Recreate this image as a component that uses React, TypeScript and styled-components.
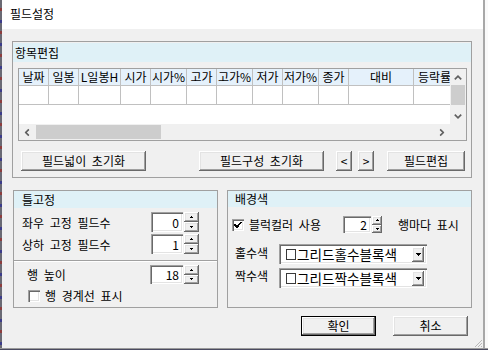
import React from "react";
import styled, { createGlobalStyle, css } from "styled-components";

const GlobalStyle = createGlobalStyle`
  html, body { margin: 0; padding: 0; background: #fafafa; overflow: hidden; }
  body {
    font-family: "Noto Sans CJK KR", "Noto Sans", "DejaVu Sans", sans-serif;
    font-size: 12px;
    color: #000;
    word-spacing: 3px;
  }
  * { box-sizing: border-box; }
`;

const raised = css`
  box-shadow: inset -1px -1px 0 #696969, inset 1px 1px 0 #ffffff,
    inset -2px -2px 0 #a0a0a0, inset 2px 2px 0 #e3e3e3;
`;
const sunken = css`
  box-shadow: inset 1px 1px 0 #a0a0a0, inset 2px 2px 0 #696969,
    inset -1px -1px 0 #ffffff, inset -2px -2px 0 #e3e3e3;
`;

const Screen = styled.div`
  width: 488px;
  height: 350px;
  display: flex;
  flex-direction: column;
`;

const Stage = styled.div`
  display: flex;
  height: 348px;
`;

const DesktopEdge = styled.div`
  width: 2px;
  background: repeating-linear-gradient(
    to bottom,
    #6a6a74 0 8px,
    #8d3d3d 8px 11px,
    #6a6a74 11px 20px,
    #3c3c8a 20px 23px
  );
`;

const BottomEdge = styled.div`
  height: 2px;
  background: linear-gradient(to bottom, #9a9a9a 0 1px, #4a4a60 1px 2px);
`;

const Window = styled.div`
  position: relative;
  width: 483px;
  display: flex;
  flex-direction: column;
  border-right: 2px solid #a8a8a8;
`;

const TitleBar = styled.div`
  height: 29px;
  background: #ffffff;
  display: flex;
  align-items: center;
  padding: 0 0 3px 8px;
  word-spacing: 0;
`;

const Body = styled.div`
  flex: 1;
  background: #f0f0f0;
  padding: 12px 0 0 10px;
  display: flex;
  flex-direction: column;
`;

const Group = styled.section<{ $w: number; $h: number }>`
  width: ${(p) => p.$w}px;
  height: ${(p) => p.$h}px;
  border: 1px solid #a0a0a0;
  display: flex;
  flex-direction: column;
  flex: 0 0 auto;
`;

const GroupTitle = styled.div<{ $h: number; $pl: number; $mt: number }>`
  height: ${(p) => p.$h}px;
  margin-top: ${(p) => p.$mt}px;
  padding-left: ${(p) => p.$pl}px;
  line-height: ${(p) => p.$h}px;
  background: #dff1f7;
  word-spacing: 0;
`;

/* ---------- grid ---------- */
const Grid = styled.div`
  margin: 6px 0 0 5px;
  width: 449px;
  height: 73px;
  border: 1px solid #a0a0a0;
  display: grid;
  grid-template-columns: 431px 16px;
  grid-template-rows: 55px 16px;
  background: #ffffff;
`;

const Cells = styled.div`
  overflow: hidden;
  background: #ffffff;
`;

const GridRow = styled.div<{ $h: number }>`
  display: flex;
  height: ${(p) => p.$h}px;
`;

const HeaderCell = styled.div<{ $w: number }>`
  flex: 0 0 ${(p) => p.$w}px;
  border-right: 1px solid #c0c0c0;
  border-bottom: 1px solid #c0c0c0;
  background: #e5f1fb;
  text-align: center;
  line-height: 16px;
  white-space: nowrap;
  overflow: hidden;
  word-spacing: 0;
`;

const DataCell = styled.div<{ $w: number }>`
  flex: 0 0 ${(p) => p.$w}px;
  border-right: 1px solid #c0c0c0;
  border-bottom: 1px solid #c0c0c0;
`;

const VScroll = styled.div`
  background: #f0f0f0;
  display: flex;
  flex-direction: column;
`;

const HScroll = styled.div`
  background: #f0f0f0;
  display: flex;
`;

const Corner = styled.div`
  background: #f0f0f0;
`;

const ScrollArrow = styled.div`
  flex: 0 0 16px;
  width: 16px;
  height: 16px;
  display: flex;
  align-items: center;
  justify-content: center;
`;

const VThumb = styled.div`
  flex: 0 0 20px;
  margin: 0 1px;
  background: #cdcdcd;
`;

const HThumb = styled.div`
  flex: 0 0 125px;
  margin: 1px 0 1px 1px;
  background: #cdcdcd;
`;

const Track = styled.div`
  flex: 1;
`;

const ChevronSvg = styled.svg<{ $rot: number }>`
  transform: rotate(${(p) => p.$rot}deg);
`;

const Chevron = ({ rot }: { rot: number }) => (
  <ChevronSvg $rot={rot} width="8" height="5" viewBox="0 0 8 5">
    <polyline points="0.8,4.4 4,1.2 7.2,4.4" fill="none" stroke="#606060" strokeWidth="1.7" />
  </ChevronSvg>
);

/* ---------- buttons ---------- */
const ButtonRow = styled.div<{ $mt: number; $pl: number; $pr: number; $justify: string }>`
  display: flex;
  margin-top: ${(p) => p.$mt}px;
  padding-left: ${(p) => p.$pl}px;
  padding-right: ${(p) => p.$pr}px;
  justify-content: ${(p) => p.$justify};
  height: 20px;
`;

const Button = styled.button<{ $w: number; $ml: number; $default?: boolean }>`
  width: ${(p) => p.$w}px;
  height: 20px;
  margin: 0 0 0 ${(p) => p.$ml}px;
  padding: 0 0 2px;
  font: inherit;
  font-size: 12px;
  word-spacing: 3px;
  color: #000;
  background: #f0f0f0;
  border: none;
  ${raised}
  ${(p) =>
    p.$default &&
    css`
      box-shadow: inset 0 0 0 1px #000000, inset -2px -2px 0 #696969, inset 2px 2px 0 #ffffff,
        inset -3px -3px 0 #a0a0a0, inset 3px 3px 0 #e3e3e3;
    `}
`;

/* ---------- lower panels ---------- */
const LowerRow = styled.div`
  display: flex;
  gap: 9px;
  margin: 12px 0 0 1px;
`;

const FieldRow = styled.div<{ $mt: number; $h: number; $pl: number }>`
  display: flex;
  align-items: center;
  margin-top: ${(p) => p.$mt}px;
  height: ${(p) => p.$h}px;
  padding-left: ${(p) => p.$pl}px;
`;

const FieldLabel = styled.span<{ $w: number; $pb?: number; $pl?: number }>`
  flex: 0 0 ${(p) => p.$w}px;
  white-space: nowrap;
  padding-bottom: ${(p) => p.$pb ?? 0}px;
  padding-left: ${(p) => p.$pl ?? 0}px;
`;

const Text = styled.span<{ $ml: number }>`
  margin-left: ${(p) => p.$ml}px;
  white-space: nowrap;
`;

const Separator = styled.div`
  margin-top: 6px;
  height: 2px;
  border-top: 1px solid #a0a0a0;
  border-bottom: 1px solid #ffffff;
`;

const Spin = styled.div<{ $h: number }>`
  display: flex;
  height: ${(p) => p.$h}px;
  gap: 1px;
`;

const SpinEdit = styled.div<{ $w: number }>`
  width: ${(p) => p.$w}px;
  height: 100%;
  background: #ffffff;
  ${sunken}
  text-align: right;
  padding-right: 4px;
  display: flex;
  align-items: center;
  justify-content: flex-end;
  font-size: 12px;
`;

const SpinButtons = styled.div<{ $w: number }>`
  width: ${(p) => p.$w}px;
  height: 100%;
  display: flex;
  flex-direction: column;
`;

const SpinButton = styled.div`
  flex: 1;
  background: #f0f0f0;
  ${raised}
  display: flex;
  align-items: center;
  justify-content: center;
`;

const TinyArrow = ({ down }: { down?: boolean }) => (
  <svg width="3" height="2" viewBox="0 0 3 2" shapeRendering="crispEdges">
    {down ? (
      <>
        <rect x="0" y="0" width="3" height="1" fill="#000" />
        <rect x="1" y="1" width="1" height="1" fill="#000" />
      </>
    ) : (
      <>
        <rect x="1" y="0" width="1" height="1" fill="#000" />
        <rect x="0" y="1" width="3" height="1" fill="#000" />
      </>
    )}
  </svg>
);

const SpinBox = ({ value, editW, btnW, h }: { value: string; editW: number; btnW: number; h: number }) => (
  <Spin $h={h}>
    <SpinEdit $w={editW}>{value}</SpinEdit>
    <SpinButtons $w={btnW}>
      <SpinButton>
        <TinyArrow />
      </SpinButton>
      <SpinButton>
        <TinyArrow down />
      </SpinButton>
    </SpinButtons>
  </Spin>
);

const CheckBox = styled.span<{ $size: number }>`
  flex: 0 0 ${(p) => p.$size}px;
  width: ${(p) => p.$size}px;
  height: ${(p) => p.$size}px;
  background: #ffffff;
  ${sunken}
  display: flex;
  align-items: center;
  justify-content: center;
`;

const Combo = styled.div`
  width: 148px;
  height: 20px;
  background: #ffffff;
  ${sunken}
  display: flex;
  align-items: center;
  padding: 2px 3px 2px 7px;
  font-size: 13.6px;
  word-spacing: 0;
`;

const Swatch = styled.span`
  flex: 0 0 10px;
  width: 10px;
  height: 11px;
  border: 1px solid #3a3a3a;
  background: #ffffff;
`;

const ComboText = styled.span`
  flex: 1;
  margin-left: 1px;
  white-space: nowrap;
  line-height: 16px;
`;

const DropButton = styled.span`
  flex: 0 0 12px;
  height: 15px;
  background: #f0f0f0;
  ${raised}
  display: flex;
  align-items: center;
  justify-content: center;
`;

const DownTriangle = () => (
  <svg width="5" height="3" viewBox="0 0 5 3" shapeRendering="crispEdges">
    <rect x="0" y="0" width="5" height="1" fill="#000" />
    <rect x="1" y="1" width="3" height="1" fill="#000" />
    <rect x="2" y="2" width="1" height="1" fill="#000" />
  </svg>
);

const Grip = styled.svg`
  position: absolute;
  right: 0;
  bottom: 0;
`;

const columns = [
  { t: "날짜", w: 30 },
  { t: "일봉", w: 30 },
  { t: "L일봉H", w: 42 },
  { t: "시가", w: 30 },
  { t: "시가%", w: 36 },
  { t: "고가", w: 30 },
  { t: "고가%", w: 36 },
  { t: "저가", w: 30 },
  { t: "저가%", w: 36 },
  { t: "종가", w: 30 },
  { t: "대비", w: 65 },
  { t: "등락률", w: 42 },
];

export default function App() {
  return (
    <>
      <GlobalStyle />
      <Screen>
        <Stage>
          <DesktopEdge />
          <Window>
            <TitleBar>필드설정</TitleBar>
            <Body>
              <Group $w={460} $h={137}>
                <GroupTitle $h={19} $pl={2} $mt={1}>
                  항목편집
                </GroupTitle>
                <Grid>
                  <Cells>
                    <GridRow $h={17}>
                      {columns.map((c) => (
                        <HeaderCell key={c.t} $w={c.w}>
                          {c.t}
                        </HeaderCell>
                      ))}
                    </GridRow>
                    <GridRow $h={19}>
                      {columns.map((c) => (
                        <DataCell key={c.t} $w={c.w} />
                      ))}
                    </GridRow>
                  </Cells>
                  <VScroll>
                    <ScrollArrow>
                      <Chevron rot={0} />
                    </ScrollArrow>
                    <VThumb />
                    <Track />
                    <ScrollArrow>
                      <Chevron rot={180} />
                    </ScrollArrow>
                  </VScroll>
                  <HScroll>
                    <ScrollArrow>
                      <Chevron rot={-90} />
                    </ScrollArrow>
                    <HThumb />
                    <Track />
                    <ScrollArrow>
                      <Chevron rot={90} />
                    </ScrollArrow>
                  </HScroll>
                  <Corner />
                </Grid>
                <ButtonRow $mt={10} $pl={8} $pr={0} $justify="flex-start">
                  <Button $w={125} $ml={0}>필드넓이 초기화</Button>
                  <Button $w={125} $ml={53}>필드구성 초기화</Button>
                  <Button $w={16} $ml={12}>&lt;</Button>
                  <Button $w={16} $ml={6}>&gt;</Button>
                  <Button $w={78} $ml={13}>필드편집</Button>
                </ButtonRow>
              </Group>

              <LowerRow>
                <Group $w={205} $h={118}>
                  <GroupTitle $h={17} $pl={8} $mt={0}>
                    틀고정
                  </GroupTitle>
                  <FieldRow $mt={4} $h={20} $pl={8}>
                    <FieldLabel $w={129}>좌우 고정 필드수</FieldLabel>
                    <SpinBox value="0" editW={32} btnW={15} h={20} />
                  </FieldRow>
                  <FieldRow $mt={2} $h={20} $pl={8}>
                    <FieldLabel $w={129}>상하 고정 필드수</FieldLabel>
                    <SpinBox value="1" editW={32} btnW={15} h={20} />
                  </FieldRow>
                  <Separator />
                  <FieldRow $mt={3} $h={19} $pl={13}>
                    <FieldLabel $w={123}>행 높이</FieldLabel>
                    <SpinBox value="18" editW={33} btnW={15} h={19} />
                  </FieldRow>
                  <FieldRow $mt={5} $h={13} $pl={14}>
                    <CheckBox $size={12} />
                    <Text $ml={5}>행 경계선 표시</Text>
                  </FieldRow>
                </Group>

                <Group $w={245} $h={118}>
                  <GroupTitle $h={16} $pl={7} $mt={0}>
                    배경색
                  </GroupTitle>
                  <FieldRow $mt={9} $h={17} $pl={4}>
                    <CheckBox $size={12}>
                      <svg width="8" height="7" viewBox="0 0 8 7" shapeRendering="crispEdges">
                        <polyline points="0.5,3.5 3,6 7.5,0.8" fill="none" stroke="#000" strokeWidth="1.8" />
                      </svg>
                    </CheckBox>
                    <FieldLabel $w={99} $pl={5}>
                      블럭컬러 사용
                    </FieldLabel>
                    <SpinBox value="2" editW={28} btnW={10} h={17} />
                    <Text $ml={16}>행마다 표시</Text>
                  </FieldRow>
                  <FieldRow $mt={11} $h={20} $pl={7}>
                    <FieldLabel $w={44} $pb={4}>
                      홀수색
                    </FieldLabel>
                    <Combo>
                      <Swatch />
                      <ComboText>그리드홀수블록색</ComboText>
                      <DropButton>
                        <DownTriangle />
                      </DropButton>
                    </Combo>
                  </FieldRow>
                  <FieldRow $mt={4} $h={20} $pl={7}>
                    <FieldLabel $w={44} $pb={6}>
                      짝수색
                    </FieldLabel>
                    <Combo>
                      <Swatch />
                      <ComboText>그리드짝수블록색</ComboText>
                      <DropButton>
                        <DownTriangle />
                      </DropButton>
                    </Combo>
                  </FieldRow>
                </Group>
              </LowerRow>

              <ButtonRow $mt={8} $pl={0} $pr={15} $justify="flex-end">
                <Button $w={75} $ml={0} $default>
                  확인
                </Button>
                <Button $w={75} $ml={17}>취소</Button>
              </ButtonRow>
            </Body>
            <Grip width="10" height="10" viewBox="0 0 10 10" shapeRendering="crispEdges">
              <line x1="9" y1="2" x2="2" y2="9" stroke="#b8b8b8" strokeWidth="1" />
              <line x1="9" y1="5" x2="5" y2="9" stroke="#b8b8b8" strokeWidth="1" />
              <line x1="9" y1="8" x2="8" y2="9" stroke="#b8b8b8" strokeWidth="1" />
            </Grip>
          </Window>
        </Stage>
        <BottomEdge />
      </Screen>
    </>
  );
}
